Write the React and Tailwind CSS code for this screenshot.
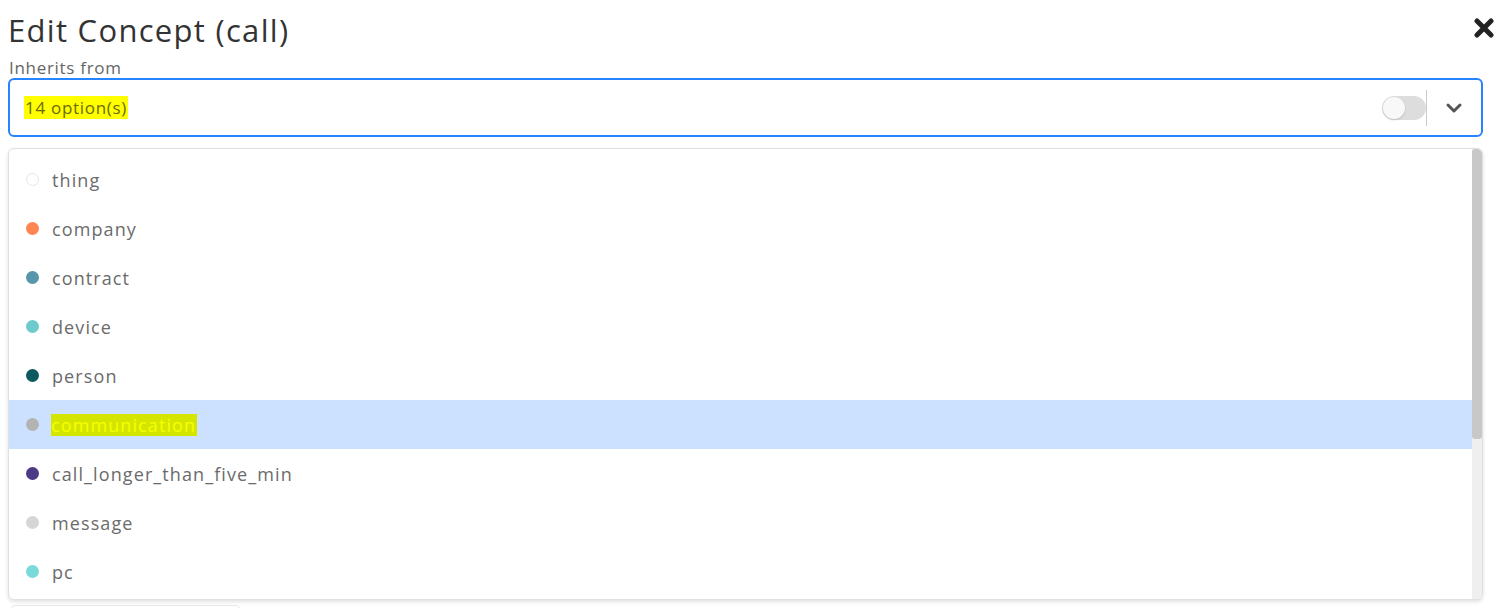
import React from "react";

const items = [
  { name: "thing", color: "#ffffff", ring: true },
  { name: "company", color: "#ff8652" },
  { name: "contract", color: "#5796ab" },
  { name: "device", color: "#6ecbcd" },
  { name: "person", color: "#0c5a5f" },
  { name: "communication", color: "#b3b3b3", active: true },
  { name: "call_longer_than_five_min", color: "#4d3a86" },
  { name: "message", color: "#d6d6d6" },
  { name: "pc", color: "#7ad9d9" },
];

export default function App() {
  return (
    <div
      className="w-[1497px] h-[608px] bg-white overflow-hidden relative"
      style={{ fontFamily: '"Open Sans", "Noto Sans", sans-serif' }}
    >
      <div className="flex items-start justify-between pl-[8px] pr-[3px] pt-[8px]">
        <h1 className="text-[31px] leading-[44px] text-[#333] font-normal tracking-[1.3px]">Edit Concept (call)</h1>
        <svg width="20" height="20" viewBox="0 0 20 20" className="mt-[10px]">
          <path d="M3 3 L17 17 M17 3 L3 17" stroke="#222" strokeWidth="5" strokeLinecap="round" />
        </svg>
      </div>
      <div className="pl-[9px] text-[17px] leading-[20px] text-[#666] mt-[6px] tracking-[0.7px]">Inherits from</div>
      <div className="mx-[8px] mt-[0px] h-[59px] w-[1475px] border-2 border-[#2684ff] rounded-[6px] flex items-center pl-[14px]">
        <div className="flex-1">
          <span className="bg-[#ffff00] text-[#6b6b00] text-[17px] leading-[22px] px-[1px] tracking-[0.7px]">14 option(s)</span>
        </div>
        <div className="w-[44px] h-[24px] rounded-full bg-[#dddddd] relative">
          <div className="absolute left-[1px] top-[1px] w-[22px] h-[22px] rounded-full bg-[#f8f8f8] shadow-[0_1px_2px_rgba(0,0,0,0.15)]" />
        </div>
        <div className="w-px h-[36px] bg-[#cccccc]" />
        <div className="w-[54px] flex justify-center">
          <svg width="20" height="20" viewBox="0 0 20 20">
            <path d="M4 7 L10 13 L16 7" stroke="#555" strokeWidth="3" fill="none" strokeLinecap="round" strokeLinejoin="round" />
          </svg>
        </div>
      </div>
      <div className="mx-[8px] mt-[11px] w-[1475px] h-[452px] rounded-[6px] border border-[#e0e0e0] shadow-[0_2px_4px_rgba(0,0,0,0.12)] bg-white flex overflow-hidden">
        <div className="flex-1 pt-[6px]">
          {items.map((it) => (
            <div
              key={it.name}
              className={`h-[49px] flex items-center pl-[17px] ${it.active ? "bg-[#cce0ff]" : ""}`}
            >
              <span
                className={`w-[13px] h-[13px] rounded-full ${it.ring ? "border border-[#e6e6e6]" : ""}`}
                style={{ backgroundColor: it.color }}
              />
              {it.active ? (
                <span className="ml-[12px] text-[18px] leading-[22px] bg-[#d4e600] text-[#f8ff00] pr-[1px] tracking-[1.1px]">{it.name}</span>
              ) : (
                <span className="ml-[13px] text-[18px] leading-[22px] text-[#6b6b6b] tracking-[1.1px]">{it.name}</span>
              )}
            </div>
          ))}
        </div>
        <div className="w-[10px] bg-[#efefef] flex flex-col">
          <div className="h-[290px] bg-[#c8c8c8] rounded-[3px]" />
        </div>
      </div>
      <div className="absolute left-[11px] top-[605px] w-[229px] h-[10px] border border-[#e6e6e6] rounded-[4px]" />
    </div>
  );
}
